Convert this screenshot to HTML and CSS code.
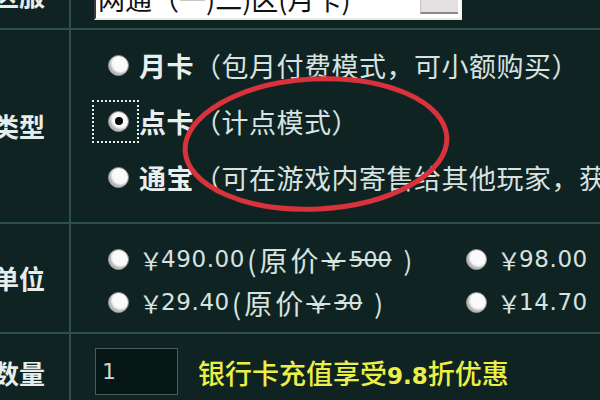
FILE: index.html
```html
<!DOCTYPE html>
<html lang="zh-CN">
<head>
<meta charset="utf-8">
<title>购买</title>
<link rel="stylesheet" href="styles.css">
</head>
<body>
<div class="form">
  <div class="row row-server">
    <div class="label label-server">区服</div>
    <div class="cell cell-server">
      <div class="select">
        <span class="select-text">网通（一)二)区(月卡)</span>
        <span class="select-btn"></span>
      </div>
    </div>
  </div>

  <div class="row row-type">
    <div class="label">类型</div>
    <div class="cell options">
      <div class="opt">
        <span class="focus"><span class="radio"></span></span>
        <b class="opt-name">月卡</b><span class="opt-desc">（包月付费模式，可小额购买）</span>
      </div>
      <div class="opt">
        <span class="focus focused"><span class="radio checked"></span></span>
        <b class="opt-name">点卡</b><span class="opt-desc">（计点模式）</span>
      </div>
      <div class="opt">
        <span class="focus"><span class="radio"></span></span>
        <b class="opt-name">通宝</b><span class="opt-desc">（可在游戏内寄售给其他玩家，获得游戏币）</span>
      </div>
    </div>
  </div>

  <div class="row row-unit">
    <div class="label">单位</div>
    <div class="cell units">
      <div class="unit">
        <span class="focus"><span class="radio"></span></span>
        <span class="yen">￥</span><span class="num">490.00</span><span class="paren">(原价</span><s class="old"><span class="yen">￥</span>500</s><span class="close">)</span>
      </div>
      <div class="unit">
        <span class="focus"><span class="radio"></span></span>
        <span class="yen">￥</span><span class="num">98.00</span>
      </div>
      <div class="unit">
        <span class="focus"><span class="radio"></span></span>
        <span class="yen">￥</span><span class="num">29.40</span><span class="paren">(原价</span><s class="old"><span class="yen">￥</span>30</s><span class="close">)</span>
      </div>
      <div class="unit">
        <span class="focus"><span class="radio"></span></span>
        <span class="yen">￥</span><span class="num">14.70</span>
      </div>
    </div>
  </div>

  <div class="row row-qty">
    <div class="label">数量</div>
    <div class="cell qty">
      <div class="input">1</div>
      <span class="promo">银行卡充值享受<b>9.8</b>折优惠</span>
    </div>
  </div>

  <svg class="annot" width="600" height="400" viewBox="0 0 600 400">
    <ellipse cx="316" cy="144" rx="131" ry="65" transform="rotate(-3 316 144)" fill="none" stroke="#d8323c" stroke-width="5"/>
  </svg>
</div>
</body>
</html>
```

FILE: styles.css
```css
html, body {
  margin: 0;
  padding: 0;
  background: #0f2422;
  overflow: hidden;
}

.form {
  position: relative;
  width: 600px;
  height: 400px;
  overflow: hidden;
  font-family: "Noto Sans CJK SC", "Noto Sans", sans-serif;
  color: #dfe8e6;
}

.row {
  display: flex;
  border-bottom: 2px solid #2c4f4b;
}

.row-server { height: 28px; }
.row-type { height: 192px; }
.row-unit { height: 108px; }
.row-qty { height: 78px; border-bottom: none; }

.label {
  flex: 0 0 71px;
  width: 71px;
  border-right: 2px solid #2c4f4b;
  display: flex;
  justify-content: flex-end;
  align-items: center;
  padding-right: 24px;
  box-sizing: border-box;
  font-size: 26px;
  font-weight: bold;
  line-height: 1;
  color: #e6eeec;
  white-space: nowrap;
}

.label-server {
  align-items: flex-end;
  padding-bottom: 20px;
}

.cell {
  flex: 1;
  min-width: 0;
}

/* server select */
.cell-server {
  display: flex;
  align-items: flex-end;
  padding-left: 23px;
  padding-bottom: 8px;
}

.select {
  display: flex;
  align-items: flex-end;
  width: 368px;
  height: 40px;
  box-sizing: border-box;
  background: #ffffff;
  border-left: 2px solid #3a3a3a;
  border-bottom: 2px solid #e8e8e8;
  border-right: 2px solid #f4f4f4;
  padding-left: 2px;
}

.select-text {
  font-size: 27px;
  line-height: 1;
  color: #111;
  padding-bottom: 6px;
  white-space: nowrap;
  flex: 1;
}

.select-btn {
  flex: 0 0 38px;
  height: 30px;
  margin: 0 2px 4px 0;
  background: #e4e0e0;
  border-bottom: 2px solid #8a8a8a;
  border-left: 1px solid #c8c4c4;
  box-sizing: border-box;
}

/* radio options */
.options {
  display: flex;
  flex-direction: column;
  padding: 7px 0 0 21px;
}

.opt {
  display: flex;
  align-items: center;
  height: 56px;
  white-space: nowrap;
  line-height: 1;
}

.focus {
  display: flex;
  align-items: center;
  box-sizing: border-box;
  width: 47px;
  height: 43px;
  padding-left: 14px;
  border: 2px dotted transparent;
  flex: 0 0 47px;
}

.focus.focused {
  border-color: #e8eeee;
}

.radio {
  display: block;
  flex: 0 0 21px;
  width: 21px;
  height: 21px;
  border-radius: 50%;
  box-sizing: border-box;
  background: #fbfafa;
  border: 1px solid #8c8e8e;
  box-shadow: inset 2px -2px 2px rgba(120, 120, 120, 0.55);
  position: relative;
}

.radio.checked::after {
  content: "";
  position: absolute;
  left: 5.5px;
  top: 5.5px;
  width: 8px;
  height: 8px;
  border-radius: 50%;
  background: #0a0a0a;
}

.opt-name {
  font-size: 27px;
  font-weight: bold;
  color: #e8efee;
  letter-spacing: 0.5px;
}

.opt-desc {
  font-size: 27px;
  color: #d8e2e0;
  letter-spacing: 0.5px;
}

/* price units */
.units {
  display: grid;
  grid-template-columns: 358px auto;
  grid-auto-rows: 43px;
  padding: 14px 0 0 21px;
  align-content: start;
}

.unit {
  display: flex;
  align-items: center;
  white-space: nowrap;
  line-height: 1;
  color: #d8e2e0;
}

.yen {
  font-family: "Noto Sans CJK SC", sans-serif;
  font-size: 24px;
  width: 22px;
  display: inline-block;
}

.num {
  font-family: "DejaVu Sans", "Verdana", sans-serif;
  font-size: 23px;
  letter-spacing: 0.6px;
}

.paren {
  font-size: 28px;
  letter-spacing: 3px;
  padding-left: 2px;
}

.old {
  font-family: "DejaVu Sans", sans-serif;
  font-size: 22px;
  text-decoration: line-through;
  text-decoration-thickness: 2px;
  display: inline-flex;
  align-items: center;
}

.old .yen {
  font-size: 24px;
  width: 28px;
}

.close {
  font-size: 26px;
  padding-left: 12px;
}

/* quantity */
.qty {
  display: flex;
  align-items: center;
  padding-left: 24px;
}

.input {
  width: 83px;
  height: 47px;
  box-sizing: border-box;
  background: #051614;
  border: 1px solid #4c5c5a;
  font-family: "DejaVu Sans", sans-serif;
  font-size: 22px;
  color: #cdd6d4;
  padding-left: 6px;
  display: flex;
  align-items: center;
  margin-top: -4px;
}

.promo {
  margin-left: 20px;
  font-size: 27px;
  color: #ecf046;
  line-height: 1;
  white-space: nowrap;
  font-weight: 500;
}

.promo b {
  font-family: "DejaVu Sans", sans-serif;
  font-size: 23px;
  font-weight: bold;
}

.annot {
  position: absolute;
  left: 0;
  top: 0;
  pointer-events: none;
}
```
